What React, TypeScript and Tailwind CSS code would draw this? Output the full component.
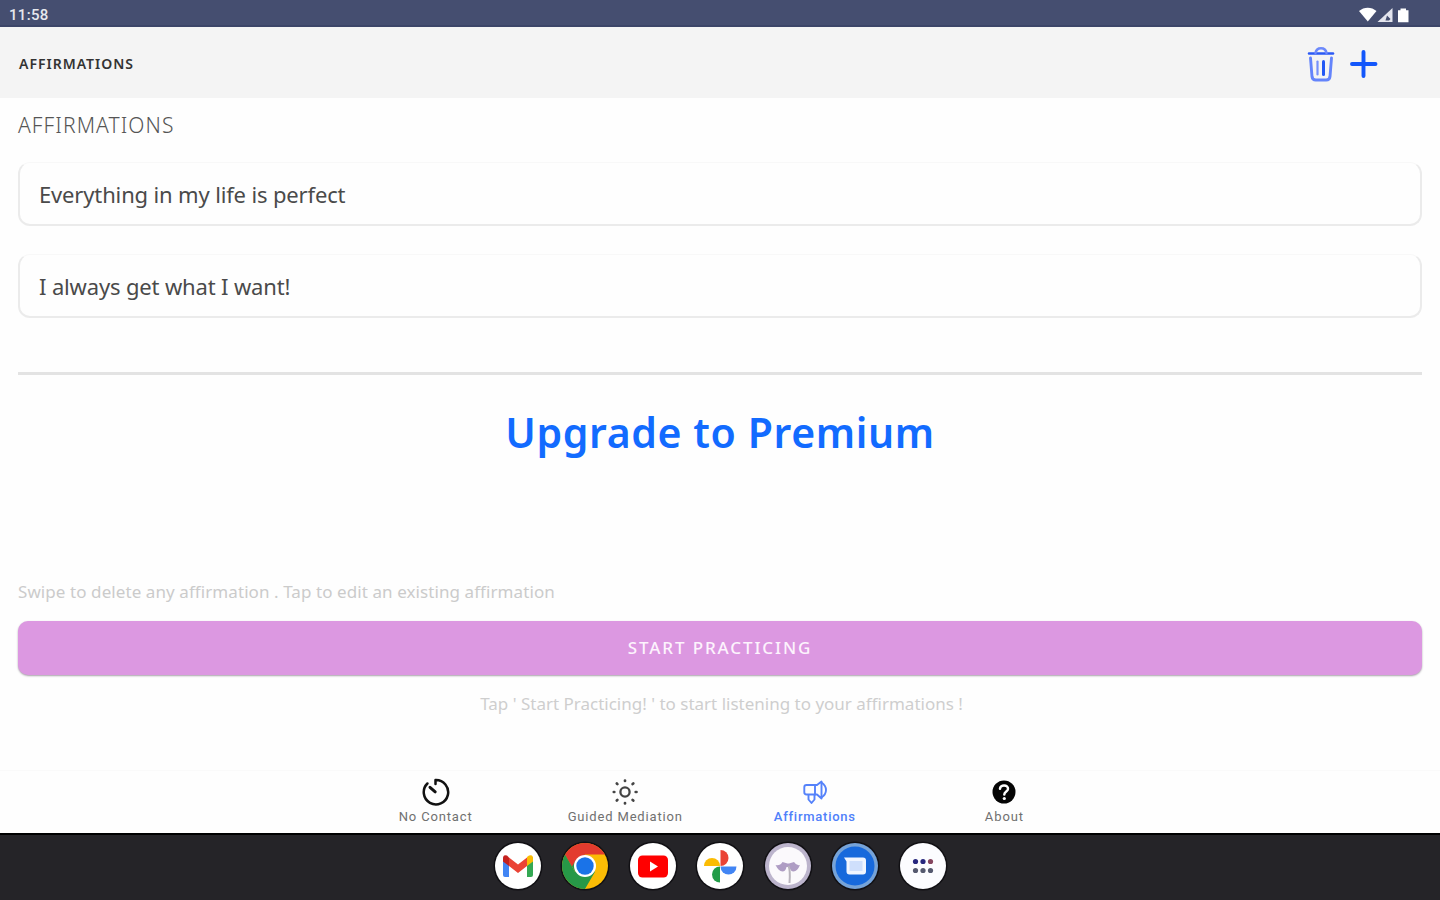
import React from "react";

const affirmations = ["Everything in my life is perfect", "I always get what I want!"];

const StatusIcons = () => (
  <svg width="54" height="18" viewBox="0 0 54 18" fill="#fff">
    <path d="M0 5C5 .500 12.500 .500 17.500 5L8.800 15.500Z" />
    <path d="M33.500 2v14H18.500Z" fill="#e4e5ee" />
    <path d="M28 9.500l3.500 3.500-1.500 1.500h-3.500z" fill="#454e70" />
    <path d="M41.500 2.500h5.500v1.700h2.500v12h-10.500v-12h2.500z" />
  </svg>
);

const TrashIcon = () => (
  <svg width="28" height="38" viewBox="0 0 28 38" fill="none" stroke="#3b63fb" strokeLinecap="round">
    <path d="M2 8.500h24" stroke="#2b59f5" strokeWidth="2.500" />
    <path d="M8.500 8C9.500 1.500 18.500 1.500 19.500 8" strokeWidth="2.500" stroke="#6d89fb" />
    <path d="M3.500 13l1.500 18.500q.4 3.500 3.800 3.500h10.400q3.400 0 3.800-3.500L24.500 13" strokeWidth="2.900" stroke="#6484fb" />
    <path d="M10.500 16.500v13" strokeWidth="2.200" stroke="#7590fb" />
    <path d="M16.500 16.500v13" strokeWidth="3" stroke="#2358f5" />
  </svg>
);

const PlusIcon = () => (
  <svg width="28" height="28" viewBox="0 0 28 28" stroke="#1357fb" strokeWidth="3.900" strokeLinecap="round">
    <path d="M13.500 2v24M2 14h23.500" />
  </svg>
);

const TimerIcon = () => (
  <svg width="30" height="30" viewBox="0 0 30 30" fill="none" stroke="#111" strokeWidth="2.500" strokeLinecap="round" strokeLinejoin="round">
    <path d="M14.500 7V3A12.200 12.200 0 1 1 6.400 6.500" />
    <path d="M9 10.300l5.200 4.500" strokeWidth="3" />
  </svg>
);

const SunIcon = () => (
  <svg width="30" height="30" viewBox="0 0 30 30" fill="none" stroke="#444" strokeLinecap="round">
    <circle cx="15" cy="15" r="4.600" strokeWidth="2.300" />
    <path
      d="M15 3.500v.5M15 26v.5M3.800 15h.5M25.700 15h.8M6.800 6.500l.6.600M22.600 22.900l.7.600M22.600 7.100l.7-.6M6.800 23.500l.6-.6"
      strokeWidth="2.700"
    />
  </svg>
);

const MegaphoneIcon = () => (
  <svg width="30" height="30" viewBox="0 0 30 30" fill="none" stroke="#5582fa" strokeWidth="1.900" strokeLinejoin="round">
    <path d="M6.500 8h8.500v9.500H6.500q-2.200 0-2.200-2.200v-5Q4.300 8 6.500 8Z" />
    <path d="M15 8h2l4.500-3.500v17L17 17.500h-2" />
    <path d="M21.500 5.500q4.500 3 4.500 7.500t-4.500 7.500" />
    <path d="M8.500 17.500v5l3 3.500 3-3.500v-5" />
  </svg>
);

const HelpIcon = () => (
  <svg width="30" height="30" viewBox="0 0 30 30" fill="none">
    <circle cx="15" cy="15" r="11.500" fill="#050505" />
    <path d="M11 11.800C11 7 19.500 7.500 19 12c-.2 2.500-3.700 2.500-3.700 5.500" stroke="#fff" strokeWidth="2.500" strokeLinecap="round" />
    <circle cx="15.300" cy="21.500" r="1.600" fill="#fff" />
  </svg>
);

const tabs = [
  { label: "No Contact", icon: <TimerIcon />, style: "text-[#707070] tracking-[0.85px]" },
  { label: "Guided Mediation", icon: <SunIcon />, style: "text-[#707070] tracking-[0.83px]" },
  { label: "Affirmations", icon: <MegaphoneIcon />, style: "text-[#4f80fa] font-medium tracking-[0.75px]" },
  { label: "About", icon: <HelpIcon />, style: "text-[#707070] tracking-[0.9px]" },
];

// Each dock icon is drawn on a 46px circle
const dock = [
  {
    name: "Gmail",
    art: (
      <>
        <circle cx="23" cy="23" r="23" fill="#fff" />
        <path d="M8 14l6 4.500V34H10q-2 0-2-2z" fill="#4285f4" />
        <path d="M32 18.500l6-4.500v18q0 2-2 2h-4z" fill="#34a853" />
        <path d="M32 14l2-1.500q4-1.500 4 3v3L32 23z" fill="#fbbc04" />
        <path d="M14 14.500l9 7 9-7V23l-9 7-9-7z" fill="#ea4335" />
        <path d="M8 15.500q0-4.500 4-3l2 2V23l-6-4.500z" fill="#c5221f" />
      </>
    ),
  },
  {
    name: "Chrome",
    art: (
      <>
        <circle cx="23" cy="23" r="23" fill="#fbbc05" />
        <path d="M3.100 11.500A23 23 0 0 0 23 46L33 28.700 23 23 13 28.700z" fill="#279847" />
        <path d="M3.100 11.500L13 28.700 23 11.500z" fill="#279847" />
        <path d="M3.100 11.500A23 23 0 0 1 42.900 11.500H23L13.500 18 10 23.500z" fill="#e33b2e" />
        <circle cx="23" cy="23" r="11" fill="#fff" />
        <circle cx="23" cy="23" r="8.700" fill="#1a73e8" />
      </>
    ),
  },
  {
    name: "YouTube",
    art: (
      <>
        <circle cx="23" cy="23" r="23" fill="#fff" />
        <rect x="8" y="12.500" width="30" height="22" rx="4.500" fill="#f00" />
        <path d="M20 18.500v10l8-5z" fill="#fff" />
      </>
    ),
  },
  {
    name: "Photos",
    art: (
      <>
        <circle cx="23" cy="23" r="23" fill="#fff" />
        <path d="M7 23a8 8 0 0 1 16 0z" fill="#fbbc04" />
        <path d="M23.500 7a8 8 0 0 1 0 16z" fill="#ea4335" />
        <path d="M23.500 23.500h16a8 8 0 0 1-16 0z" fill="#4285f4" />
        <path d="M23 23.500v16a8 8 0 0 1 0-16z" fill="#229c48" />
      </>
    ),
  },
  {
    name: "No Contact",
    art: (
      <>
        <circle cx="23" cy="23" r="23" fill="#bcb4cc" />
        <circle cx="23" cy="23" r="19" fill="#fbf9fc" />
        <path d="M10.500 22q4.500 1 7-3l5 1.500h1.500l5-1.500q2.500 4 6 3-2.500 6-6.500 6.500-3 0-4-4.500h-3q-1 4.500-4 4.500-4-.5-7-6.500z" fill="#af9dc4" />
        <path d="M23.500 23q2 4 1 17" fill="none" stroke="#b9b4bd" strokeWidth="2" />
      </>
    ),
  },
  {
    name: "Messages",
    art: (
      <>
        <circle cx="23" cy="23" r="23" fill="#76a3d8" />
        <circle cx="23" cy="23" r="19.500" fill="#1769dc" />
        <path d="M12 14.500h19q3 0 3 3v11q0 3-3 3H17.500q-3 0-3-3V18.500z" fill="#f0f5ff" />
        <path d="M17.500 18h13v10h-13z" fill="#cfdffc" />
      </>
    ),
  },
  {
    name: "All apps",
    art: (
      <>
        <circle cx="23" cy="23" r="23" fill="#fcfcff" />
        <circle cx="15.500" cy="18.500" r="2.600" fill="#27277e" />
        <circle cx="23" cy="18.500" r="2.600" fill="#27277e" />
        <circle cx="30.500" cy="18.500" r="2.600" fill="#85455f" />
        <circle cx="15.500" cy="27.500" r="2.600" fill="#55596f" />
        <circle cx="23" cy="27.500" r="2.600" fill="#55596f" />
        <circle cx="30.500" cy="27.500" r="2.600" fill="#55596f" />
      </>
    ),
  },
];

const App = () => {
  return (
    <div className="flex h-[900px] w-[1440px] flex-col overflow-hidden whitespace-nowrap bg-[#fefefe] font-['Noto_Sans',sans-serif]">
      {/* Status bar */}
      <div className="flex h-[27px] shrink-0 items-center justify-between border-b-2 border-[#3c4568] bg-[#454e70] pl-[9px] pr-[27px] pt-[4px]">
        <span className="font-['Roboto',sans-serif] text-[15px] font-medium leading-4 tracking-[0.3px] text-[#e6e7ed]">11:58</span>
        <StatusIcons />
      </div>

      {/* App header */}
      <header className="flex h-[71px] shrink-0 items-center justify-between bg-[#f4f4f4] pl-[19px] pr-[62px] pt-[2px]">
        <h1 className="text-[14px] font-semibold leading-5 tracking-[1px] text-[#333]">AFFIRMATIONS</h1>
        <div className="flex items-center gap-[15px]">
          <TrashIcon />
          <PlusIcon />
        </div>
      </header>

      <main className="flex flex-1 flex-col px-[18px] pt-3">
        <h2 className="text-[21px] font-light leading-[30px] tracking-[1.1px] text-[#555]">AFFIRMATIONS</h2>

        <ul className="mt-[22px] flex flex-col gap-7">
          {affirmations.map((text) => (
            <li
              key={text}
              className="flex h-16 items-center rounded-xl border-x-2 border-b-2 border-t border-[#ebebeb] border-t-[#f8f8f8] pl-[19px] pt-[2px] text-[22px] tracking-[-0.15px] text-[#4a4a4a]"
            >
              {text}
            </li>
          ))}
        </ul>

        <hr className="mt-[54px] border-t-[3px] border-[#e3e3e3]" />

        <button className="mt-[28px] self-center text-[41px] font-semibold leading-[58px] tracking-[0.6px] text-[#126bff]">
          Upgrade to Premium
        </button>

        <p className="mt-[119px] text-[17px] leading-6 tracking-[0.08px] text-[#cbcbcb]">
          Swipe to delete any affirmation . Tap to edit an existing affirmation
        </p>
        <button className="mt-[17px] h-[54px] shrink-0 rounded-[10px] bg-[#dc98e1] text-[17px] font-medium tracking-[1.9px] text-[#fdf3fd] shadow-[0_1px_2px_#a6a0a8]">
          START PRACTICING
        </button>
        <p className="mt-[17px] pl-[3px] text-center text-[17px] leading-6 text-[#cecece]">
          Tap ' Start Practicing! ' to start listening to your affirmations !
        </p>
      </main>

      {/* Tab bar */}
      <nav className="flex h-[63px] shrink-0 justify-center border-t border-[#fafafa] pt-[6px]">
        {tabs.map((tab) => (
          <div key={tab.label} className="flex w-[189.600px] flex-col items-center">
            {tab.icon}
            <span className={`font-['Roboto',sans-serif] text-[13px] leading-5 ${tab.style}`}>{tab.label}</span>
          </div>
        ))}
      </nav>

      {/* System dock */}
      <div className="flex h-[67px] shrink-0 items-center justify-center gap-[21.500px] border-t-2 border-black bg-[#252428] pb-[3px]">
        {dock.map((app) => (
          <svg key={app.name} width="46" height="46" viewBox="0 0 46 46" className="overflow-visible">
            <circle cx="23" cy="23" r="24.500" fill="#111014" />
            {app.art}
          </svg>
        ))}
      </div>
    </div>
  );
};

export default App;
